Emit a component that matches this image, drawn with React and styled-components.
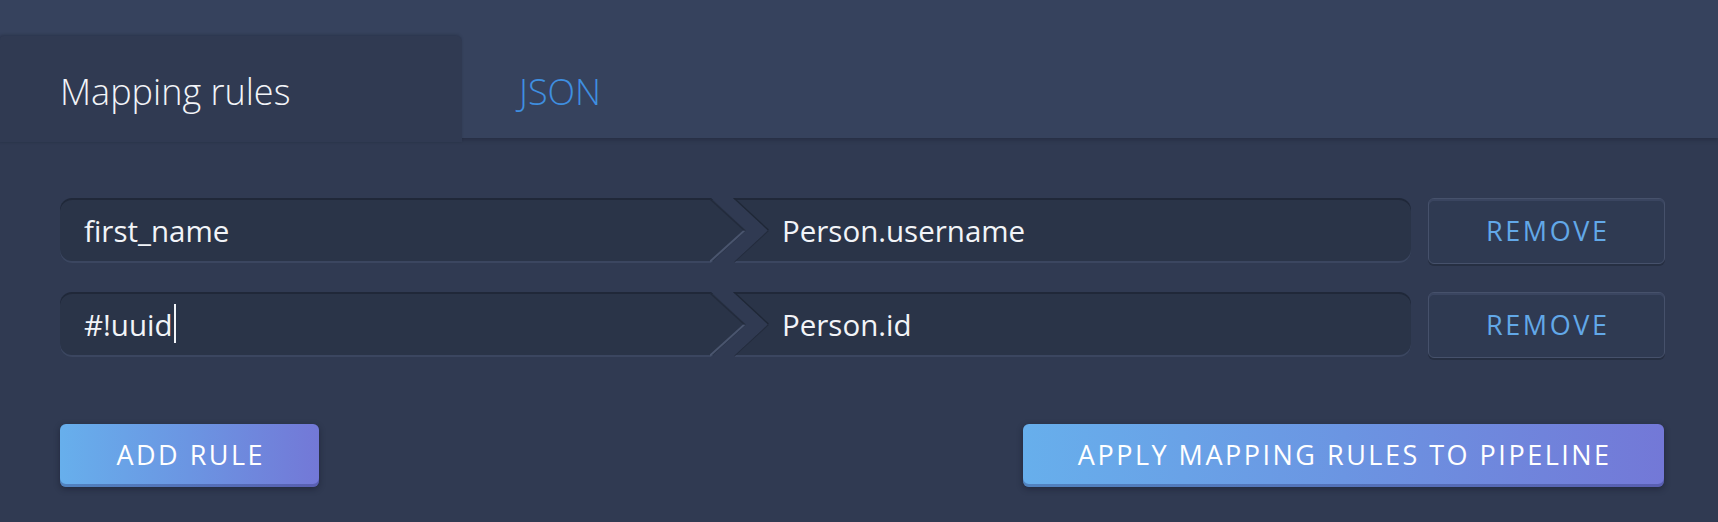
import React from "react";
import styled, { createGlobalStyle } from "styled-components";

const Global = createGlobalStyle`
  html, body { margin: 0; padding: 0; background: #303a52; }
  body { font-family: "Open Sans", "Noto Sans", sans-serif; }
  * { box-sizing: border-box; }
`;

const Page = styled.div`
  width: 1718px;
  height: 522px;
  display: flex;
  flex-direction: column;
  background: #303a52;
  overflow: hidden;
`;

const TabBar = styled.div`
  height: 138px;
  flex: 0 0 138px;
  display: flex;
  align-items: flex-end;
  background: #36425d;
  position: relative;
  z-index: 1;
  box-shadow: 0 2px 4px rgba(20, 26, 40, 0.35);
`;

const Tab = styled.div`
  width: ${(p) => (p.$active ? "462px" : "auto")};
  display: flex;
  align-items: center;
  padding-left: ${(p) => (p.$active ? "60px" : "57px")};
  padding-top: 8px;
  font-family: "Open Sans", sans-serif;
  font-weight: 300;
  font-size: 36px;
  color: ${(p) => (p.$active ? "#f2f4f8" : "#3f8fe0")};
  background: ${(p) => (p.$active ? "#303a52" : "transparent")};
  border-radius: 4px 5px 0 0;
  box-shadow: ${(p) =>
    p.$active ? "-1px -1px 3px rgba(20, 26, 40, 0.35)" : "none"};
  position: relative;
  z-index: 2;
  margin-bottom: ${(p) => (p.$active ? "-4px" : "0")};
  height: ${(p) => (p.$active ? "106px" : "102px")};
  padding-bottom: ${(p) => (p.$active ? "4px" : "0")};
`;

const Content = styled.div`
  flex: 1;
  display: flex;
  flex-direction: column;
  padding: 60px 53px 0 60px;
  background: #303a52;
`;

const Rules = styled.div`
  display: flex;
  flex-direction: column;
  gap: 29px;
`;

const Row = styled.div`
  display: flex;
  align-items: center;
  height: 65px;
`;

const Field = styled.div`
  position: relative;
  height: 65px;
  min-width: 0;
  display: flex;
  align-items: center;
  background: #2a3448;
  box-shadow: inset 0 2px 0 rgba(20, 26, 40, 0.45),
    inset 0 -2px 0 #3b4660;
  font-family: "Open Sans", sans-serif;
  font-size: 29.5px;
  color: #f2f4f8;
  white-space: nowrap;
`;

const Source = styled(Field)`
  flex: 0 0 686px;
  margin-right: -13px;
  padding-left: 24px;
  border-radius: 12px 0 0 12px;
  clip-path: polygon(0 0, calc(100% - 35px) 0, 100% 50%, calc(100% - 35px) 100%, 0 100%);
`;

const Target = styled(Field)`
  flex: 1 1 0;
  padding-left: 49px;
  border-radius: 0 12px 12px 0;
  clip-path: polygon(0 0, 100% 0, 100% 100%, 0 100%, 35px 50%);
`;

const Edge = styled.svg`
  position: absolute;
  top: 0;
  ${(p) => (p.$side === "right" ? "right: 0;" : "left: 0;")}
  width: 36px;
  height: 65px;
  pointer-events: none;
`;

const Caret = styled.span`
  display: inline-block;
  width: 2px;
  height: 39px;
  background: #f2f4f8;
  margin-left: 1px;
  vertical-align: middle;
  position: relative;
  top: -1px;
`;

const RemoveButton = styled.button`
  flex: 0 0 237px;
  height: 66px;
  margin-left: 17px;
  background: #2f3a52;
  border: 1px solid #46516b;
  border-radius: 6px;
  box-shadow: inset 0 2px 0 #3a4560, 0 2px 0 #262f42;
  color: #62a8e8;
  font-family: "Open Sans", sans-serif;
  font-size: 27px;
  letter-spacing: 2.6px;
  text-indent: 2.6px;
  padding: 0;
  cursor: pointer;
`;

const Actions = styled.div`
  display: flex;
  justify-content: space-between;
  margin-top: 67px;
  padding-right: 1px;
`;

const PrimaryButton = styled.button`
  width: ${(p) => p.$width};
  height: 63px;
  border: none;
  border-radius: 6px;
  background: linear-gradient(90deg, #67afec 0%, #6b95e2 50%, #7378d7 100%);
  box-shadow: inset 0 -3px 0 rgba(40, 50, 110, 0.35), 0 2px 6px rgba(15, 20, 35, 0.45);
  color: #ffffff;
  font-family: "Open Sans", sans-serif;
  font-size: 27px;
  letter-spacing: 2.5px;
  text-indent: 2.5px;
  padding: 0 0 2px;
  cursor: pointer;
`;

function SourceEdge() {
  return (
    <Edge $side="right" viewBox="0 0 36 65">
      <line x1="0" y1="63.5" x2="34.5" y2="32.5" stroke="#4a556e" strokeWidth="2" />
      <line x1="0" y1="1" x2="34.5" y2="32.5" stroke="#232b3c" strokeWidth="1.5" />
    </Edge>
  );
}

function TargetEdge() {
  return (
    <Edge $side="left" viewBox="0 0 36 65">
      <line x1="0.5" y1="0.5" x2="35" y2="32.5" stroke="#1f2736" strokeWidth="2.5" />
      <line x1="35" y1="32.5" x2="0.5" y2="64" stroke="#232b3c" strokeWidth="2" />
    </Edge>
  );
}

const rules = [
  { from: "first_name", to: "Person.username" },
  { from: "#!uuid", to: "Person.id", focused: true },
];

export default function App() {
  return (
    <Page>
      <Global />
      <TabBar>
        <Tab $active>Mapping rules</Tab>
        <Tab>JSON</Tab>
      </TabBar>
      <Content>
        <Rules>
          {rules.map((r) => (
            <Row key={r.from}>
              <Source>
                <span>{r.from}</span>
                {r.focused && <Caret />}
                <SourceEdge />
              </Source>
              <Target>
                <span>{r.to}</span>
                <TargetEdge />
              </Target>
              <RemoveButton>REMOVE</RemoveButton>
            </Row>
          ))}
        </Rules>
        <Actions>
          <PrimaryButton $width="259px">ADD RULE</PrimaryButton>
          <PrimaryButton $width="641px">APPLY MAPPING RULES TO PIPELINE</PrimaryButton>
        </Actions>
      </Content>
    </Page>
  );
}
